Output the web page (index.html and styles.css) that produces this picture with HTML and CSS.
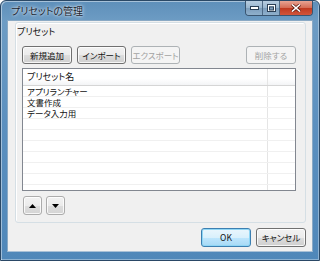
FILE: index.html
```html
<!DOCTYPE html>
<html lang="ja">
<head>
<meta charset="utf-8">
<title>プリセットの管理</title>
<link rel="stylesheet" href="styles.css">
</head>
<body>
<div class="window">
  <div class="titlebar">
    <span class="title">プリセットの管理</span>
    <div class="caption">
      <span class="cbtn min"><svg width="9" height="4" viewBox="0 0 9 4"><rect x="0.5" y="0.5" width="8" height="3" fill="#fff" stroke="#2b3f55" stroke-width="1"/></svg></span>
      <span class="cbtn max"><svg width="9" height="8" viewBox="0 0 9 8"><rect x="0.5" y="0.5" width="8" height="7" fill="none" stroke="#2b3f55" stroke-width="1"/><rect x="1.5" y="1.5" width="6" height="5" fill="none" stroke="#fff" stroke-width="1"/><rect x="2.5" y="3" width="4" height="3" fill="none" stroke="#2b3f55" stroke-width="1"/></svg></span>
      <span class="cbtn close"><svg width="10" height="8" viewBox="0 0 10 8"><path d="M1 0.5 L9 7.5 M9 0.5 L1 7.5" stroke="#5a1a10" stroke-width="3"/><path d="M1 0.5 L9 7.5 M9 0.5 L1 7.5" stroke="#fff" stroke-width="1.6"/></svg></span>
    </div>
  </div>
  <div class="client">
    <div class="group">
      <div class="legend">プリセット</div>
      <div class="toolbar">
        <button class="btn w50">新規追加</button>
        <button class="btn w49">インポート</button>
        <button class="btn w49 disabled">エクスポート</button>
        <span class="spacer"></span>
        <button class="btn w50 disabled">削除する</button>
      </div>
      <div class="list">
        <div class="lhead"><div class="c1">プリセット名</div><div class="c2"></div></div>
        <div class="row"><div class="c1">アプリランチャー</div><div class="c2"></div></div>
        <div class="row"><div class="c1">文書作成</div><div class="c2"></div></div>
        <div class="row"><div class="c1">データ入力用</div><div class="c2"></div></div>
        <div class="row"><div class="c1"></div><div class="c2"></div></div>
        <div class="row"><div class="c1"></div><div class="c2"></div></div>
        <div class="row"><div class="c1"></div><div class="c2"></div></div>
        <div class="row"><div class="c1"></div><div class="c2"></div></div>
        <div class="row"><div class="c1"></div><div class="c2"></div></div>
        <div class="row"><div class="c1"></div><div class="c2"></div></div>
        <div class="fill"><div class="c1"></div><div class="c2"></div></div>
      </div>
      <div class="moves">
        <button class="sbtn"><svg width="7" height="4" viewBox="0 0 7 4"><path d="M3.5 0 L7 4 L0 4 Z" fill="#000"/></svg></button>
        <button class="sbtn"><svg width="7" height="4" viewBox="0 0 7 4"><path d="M0 0 L7 0 L3.5 4 Z" fill="#000"/></svg></button>
      </div>
    </div>
    <div class="footer">
      <button class="btn w50 ok">OK</button>
      <button class="btn w50">キャンセル</button>
    </div>
  </div>
</div>
</body>
</html>
```

FILE: styles.css
```css
* { box-sizing: border-box; }
html, body { margin: 0; padding: 0; background: #fff; }
body {
  font-family: "Noto Sans CJK JP", "Noto Sans", sans-serif;
  font-feature-settings: "palt";
  font-size: 9px;
  color: #111;
}
.window {
  width: 320px;
  height: 261px;
  display: flex;
  flex-direction: column;
  padding: 0 6px 8px 6px;
  border: 1px solid #2a4866;
  border-radius: 6px 6px 0 0;
  background: linear-gradient(to bottom, #5e8fba 0px, #6d9cc4 20px, #5c90bf 120px, #4f87b9 261px);
  box-shadow: inset 1px 1px 0 rgba(255,255,255,0.45), inset -1px -1px 0 rgba(255,255,255,0.35);
}
.titlebar {
  height: 19px;
  display: flex;
  align-items: center;
  flex-shrink: 0;
}
.title {
  margin-left: 4px;
  font-size: 10px;
  color: #1a2430;
  text-shadow: 0 0 4px rgba(255,255,255,0.9), 0 0 2px rgba(255,255,255,0.7);
  line-height: 12px;
}
.caption {
  margin-left: auto;
  align-self: flex-start;
  display: flex;
  height: 15px;
  border: 1px solid #3a5570;
  border-top: none;
  border-radius: 0 0 4px 4px;
  overflow: hidden;
}
.cbtn {
  display: flex;
  align-items: center;
  justify-content: center;
  height: 100%;
}
.min, .max {
  width: 17px;
  background: linear-gradient(to bottom, #b7cde0 0%, #98b5cf 50%, #7c9dbc 51%, #8fb0cc 100%);
  border-right: 1px solid #4d6985;
}
.close {
  width: 32px;
  background: linear-gradient(to bottom, #e8a493 0%, #d46a53 50%, #c0391f 51%, #d1553b 100%);
}
.client {
  flex: 1;
  background: #f0f0f0;
  display: flex;
  flex-direction: column;
  border: 1px solid #8aa9c4;
  border-bottom-color: #a8c0d6;
}
.group {
  margin: 1px 6px 0 7px;
  border: 1px solid #d5dfe5;
  border-radius: 3px;
  box-shadow: 1px 1px 0 #fff inset;
  padding: 4px 9px 7px 6px;
  display: flex;
  flex-direction: column;
}
.legend {
  margin-left: -5px;
  line-height: 10px;
  height: 10px;
  margin-bottom: 9px;
}
.toolbar {
  display: flex;
  gap: 5px;
  height: 18px;
}
.spacer { flex: 1; }
.btn {
  font: inherit;
  font-size: 8.5px;
  color: #111;
  height: 18px;
  padding: 0;
  border: 1px solid #707070;
  border-radius: 3px;
  background: linear-gradient(to bottom, #f2f2f2 0%, #ebebeb 50%, #dddddd 51%, #cfcfcf 100%);
  box-shadow: inset 0 0 0 1px rgba(255,255,255,0.8);
  line-height: 14px;
}
.w50 { width: 50px; }
.w49 { width: 49px; }
.btn.disabled {
  color: #a3a3a3;
  border-color: #adb2b5;
  background: #f4f4f4;
  box-shadow: none;
}
.list {
  margin-top: 4px;
  height: 123px;
  border: 1px solid #828790;
  background: #fff;
  display: flex;
  flex-direction: column;
  overflow: hidden;
}
.lhead, .row, .fill { display: flex; flex-shrink: 0; }
.lhead {
  height: 17px;
  border-bottom: 1px solid #d5d5d5;
  background: linear-gradient(to bottom, #ffffff 0%, #ffffff 60%, #f3f4f6 100%);
  align-items: center;
}
.c1 { width: 244px; padding-left: 4px; }
.c2 { flex: 1; border-left: 1px solid #e5e5e5; align-self: stretch; }
.lhead .c1 { line-height: 16px; }
.row {
  height: 11px;
  border-bottom: 1px solid #f0f0f0;
}
.row .c1 {
  font-size: 8.5px;
  line-height: 10px;
  height: 10px;
  overflow: hidden;
}
.fill { flex: 1; }
.moves {
  margin-top: 5px;
  margin-left: 1px;
  display: flex;
  gap: 4px;
}
.sbtn {
  width: 19px;
  height: 19px;
  padding: 0;
  border: 1px solid #acacac;
  border-radius: 3px;
  background: linear-gradient(to bottom, #f2f2f2 0%, #ebebeb 50%, #dddddd 51%, #d4d4d4 100%);
  box-shadow: inset 0 0 0 1px rgba(255,255,255,0.8);
  display: flex;
  align-items: center;
  justify-content: center;
}
.footer {
  margin: 5px 6px 0 0;
  display: flex;
  justify-content: flex-end;
  gap: 5px;
}
.footer .btn { height: 19px; line-height: 15px; }
.btn.ok {
  border-color: #3c7fb1;
  background: linear-gradient(to bottom, #eaf6fd 0%, #d9f0fc 50%, #bee6fd 51%, #a7d9f5 100%);
  box-shadow: inset 0 0 0 1px #8fd6f5;
}
```
